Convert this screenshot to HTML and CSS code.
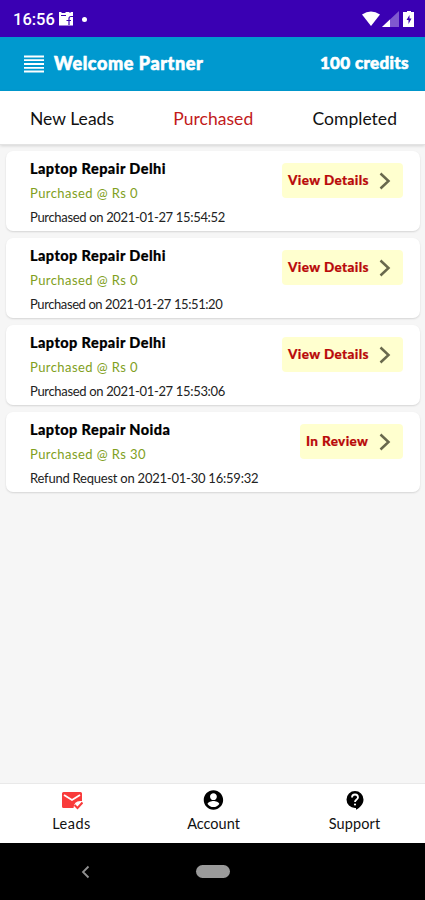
FILE: index.html
```html
<!DOCTYPE html>
<html lang="en">
<head>
<meta charset="utf-8">
<title>Leads</title>
<link rel="stylesheet" href="styles.css">
</head>
<body>
<div class="status">
  <span class="clock">16:56</span>
  <svg class="news" width="16" height="16" viewBox="0 0 16 16"><path fill="#fff" d="M1 1h2l1 1h3l1-1h3l1 1 1-1h2v13.500H1z"/><path fill="none" stroke="#3a00b3" stroke-width="1.200" d="M3 4.500h5M15 5.500h-2q-2 0-2 2V14M8.500 9.500h4.500"/></svg>
  <span class="dot"></span>
  <svg class="signals" width="53" height="18" viewBox="0 0 53 18"><path fill="#fff" d="M0 4.500Q9 -1.500 18 4.500L9 16z"/><path fill="#8059cf" d="M37 1v16H20z"/><path fill="#fff" d="M28 9.500V17h-8z"/><path fill="#fff" d="M43 2h2V1h4v1h3v15H41V2z"/><path fill="#3a00b3" d="M47.500 5l-3 5h2v4l3-5.500h-2z"/></svg>
</div>
<header class="header">
  <svg width="20" height="18" viewBox="0 0 20 18"><path stroke="#fff" stroke-width="1.800" d="M0 1.500h20M0 5.200h20M0 9h20M0 12.800h20M0 16.500h20"/></svg>
  <span class="welcome">Welcome Partner</span>
  <span class="credits">100 credits</span>
</header>
<nav class="tabs">
  <span class="new">New Leads</span><span class="purchased">Purchased</span><span class="completed">Completed</span>
</nav>
<main class="list">
  <article class="card">
    <div><h2>Laptop Repair Delhi</h2><p class="price">Purchased @ Rs 0</p><p class="date d1">Purchased on 2021-01-27 15:54:52</p></div>
    <span class="chip"><b>View Details</b><svg width="12" height="18" viewBox="0 0 12 18"><path d="M1.500 1.500L9.500 9l-8 7.500"/></svg></span>
  </article>
  <article class="card">
    <div><h2>Laptop Repair Delhi</h2><p class="price">Purchased @ Rs 0</p><p class="date d2">Purchased on 2021-01-27 15:51:20</p></div>
    <span class="chip"><b>View Details</b><svg width="12" height="18" viewBox="0 0 12 18"><path d="M1.500 1.500L9.500 9l-8 7.500"/></svg></span>
  </article>
  <article class="card">
    <div><h2>Laptop Repair Delhi</h2><p class="price">Purchased @ Rs 0</p><p class="date d1">Purchased on 2021-01-27 15:53:06</p></div>
    <span class="chip"><b>View Details</b><svg width="12" height="18" viewBox="0 0 12 18"><path d="M1.500 1.500L9.500 9l-8 7.500"/></svg></span>
  </article>
  <article class="card">
    <div><h2 class="noida">Laptop Repair Noida</h2><p class="price">Purchased @ Rs 30</p><p class="date d3">Refund Request on 2021-01-30 16:59:32</p></div>
    <span class="chip review"><b>In Review</b><svg width="12" height="18" viewBox="0 0 12 18"><path d="M1.500 1.500L9.500 9l-8 7.500"/></svg></span>
  </article>
</main>
<nav class="bottom">
  <div class="item"><svg width="22" height="20" viewBox="0 0 22 20"><path fill="#f93b3b" d="M2.500 2h17q1.500 0 1.500 1.500V11q-8-1-8.500 7H2.500Q1 18 1 16.500v-13Q1 2 2.500 2z"/><path fill="none" stroke="#fff" stroke-width="1.800" d="M3 5l8 5 8-5"/><path fill="none" stroke="#f93b3b" stroke-width="2" d="M13.500 15l3 3 5-5.500"/></svg><span class="leads">Leads</span></div>
  <div class="item"><svg width="22" height="20" viewBox="2 2 22 20"><g transform="translate(.8 .4) scale(.97)"><path d="M12 2C6.480 2 2 6.480 2 12s4.480 10 10 10 10-4.480 10-10S17.520 2 12 2zm0 3c1.940 0 3.500 1.560 3.500 3.500S13.940 12 12 12 8.500 10.440 8.500 8.500 10.060 5 12 5zm0 14.200c-2.500 0-4.710-1.280-6-3.220.03-1.990 4-3.080 6-3.080s5.970 1.090 6 3.080c-1.290 1.940-3.500 3.220-6 3.220z"/></g></svg><span class="account">Account</span></div>
  <div class="item"><svg width="22" height="20" viewBox="0 0 22 20"><path d="M11 1a8.500 8.500 0 0 1 8.500 8.500c0 4.700-3.500 8.100-7.500 10.300V18h-1A8.500 8.500 0 0 1 11 1z"/><path fill="none" stroke="#fff" stroke-width="1.800" d="M8 7.500c0-4 6-4 6 0 0 2-3 2-3 4.500"/><circle cx="11" cy="14.500" r="1.100" fill="#fff"/></svg><span class="support">Support</span></div>
</nav>
<footer class="system">
  <div><svg width="9" height="14" viewBox="0 0 9 14"><path fill="none" stroke="#919191" stroke-width="1.800" d="M7.500 1.500L2 7l5.500 5.500"/></svg></div>
  <div><span class="pill"></span></div>
  <div></div>
</footer>
</body>
</html>
```
FILE: styles.css
```css
* { box-sizing: border-box; }
body { margin: 0; width: 425px; height: 900px; display: flex; flex-direction: column; overflow: hidden; background: #f6f6f6; color: #111; font-family: Lato, "Open Sans", sans-serif; white-space: nowrap; }
svg { display: block; flex: none; }
h2, p { margin: 0; }
.status { height: 37px; flex: none; display: flex; align-items: center; padding: 1px 10px 0 13px; background: #3a00b3; color: #fff; }
.clock { width: 41px; font: 500 16.500px Roboto, sans-serif; }
.news { margin-left: 4px; }
.dot { width: 5px; height: 5px; margin-left: 8px; border-radius: 50%; background: #fff; }
.signals { margin-left: auto; }
.header { height: 54px; flex: none; display: flex; align-items: center; padding: 0 17px 0 23px; background: #0099cf; color: #fff; font-weight: 900; font-size: 18px; line-height: 24px; }
.header svg { margin-left: 1px; }
.welcome { margin: -2px 0 0 10px; letter-spacing: .58px; -webkit-text-stroke: .6px #fff; }
.credits { margin: -3px -1px 0 auto; font-size: 17px; letter-spacing: .35px; -webkit-text-stroke: .6px #fff; }
.tabs { height: 54px; flex: none; display: flex; justify-content: space-between; align-items: center; padding: 1px 28px 0 30px; background: #fff; border-bottom: 1px solid #e3e3e3; box-shadow: 0 1px 3px #0002; font-size: 17.500px; letter-spacing: .03px; }
.purchased { color: #c21b1b; }
.list { flex: 1; display: flex; flex-direction: column; gap: 7px; padding: 6px 5px 0 6px; }
.card { height: 80px; flex: none; display: flex; justify-content: space-between; align-items: flex-start; padding: 7px 17px 0 24px; border-radius: 7px; background: #fff; box-shadow: 0 1px 2px #0002; }
h2 { color: #000; font-size: 14.500px; line-height: 22px; font-weight: 900; letter-spacing: .42px; -webkit-text-stroke: .2px #000; }
.price { margin-top: 2px; color: #81a01d; font-size: 13px; line-height: 22px; letter-spacing: .42px; }
.date { margin-top: 2px; color: #222; font-size: 13px; line-height: 22px; }
.d1 { letter-spacing: -.33px; }
.d2 { letter-spacing: -.41px; }
.d3 { letter-spacing: -.23px; }
.chip { width: 121px; height: 35px; margin-top: 5px; display: flex; align-items: center; padding-left: 6px; border-radius: 4px; background: #ffffcf; }
.chip b { width: 91px; margin-top: -1px; color: #b90a0a; font-size: 13.500px; line-height: 20px; font-weight: 900; letter-spacing: .38px; -webkit-text-stroke: .2px #b90a0a; }
.chip path { fill: none; stroke: #69694d; stroke-width: 2.500; }
.review { width: 103px; }
.review b { width: 73px; }
.bottom { height: 60px; flex: none; display: grid; grid-template-columns: 143px 141px 141px; background: #fff; border-top: 1px solid #e9e9e9; }
.item { display: flex; flex-direction: column; align-items: center; padding-top: 6px; font-size: 14.500px; }
.item span { line-height: 20px; margin-top: 4px; }
.leads { letter-spacing: .5px; }
.support { letter-spacing: .1px; }
.system { height: 57px; flex: none; display: grid; grid-template-columns: 171px 84px 1fr; background: #000; }
.system div { display: grid; place-items: center; }
.pill { width: 34px; height: 13px; border-radius: 7px; background: #9a9a9a; }
```
